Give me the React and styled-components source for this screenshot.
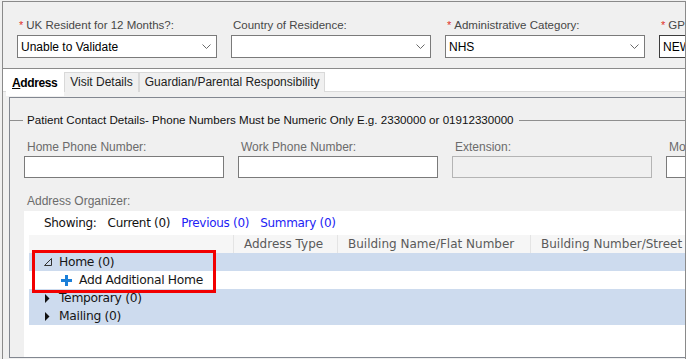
import React from "react";
import styled, { createGlobalStyle } from "styled-components";

const GlobalStyle = createGlobalStyle`
  html, body {
    margin: 0;
    padding: 0;
    background: #f0f0f0;
    overflow: hidden;
  }
  body {
    font-family: "Liberation Sans", Arial, sans-serif;
  }
`;

// top bar fields
const topFields = [
  { label: "UK Resident for 12 Months?:", value: "Unable to Validate", required: true },
  { label: "Country of Residence:", value: "" },
  { label: "Administrative Category:", value: "NHS", required: true },
  { label: "GP Practice:", value: "NEWCASTLE", required: true, focused: true },
];

const phoneFields = [
  { label: "Home Phone Number:" },
  { label: "Work Phone Number:" },
  { label: "Extension:", disabled: true },
  { label: "Mobile Phone Number:" },
];

const columns = [
  { title: "", width: 205 },
  { title: "Address Type", width: 104 },
  { title: "Building Name/Flat Number", width: 193 },
  { title: "Building Number/Street", width: 200 },
];

const Chevron = () => (
  <svg width="9" height="5" viewBox="0 0 9 5">
    <polyline points="0.5,0.5 4.5,4.5 8.5,0.5" fill="none" stroke="#6a6a6a" strokeWidth="1" />
  </svg>
);

const OpenGlyph = () => (
  <svg width="8" height="8" viewBox="0 0 8 8">
    <path d="M7.5 0.5 L7.5 7.5 L0.5 7.5 Z" fill="none" stroke="#333" strokeWidth="1" />
  </svg>
);

const ClosedGlyph = () => (
  <svg width="8" height="9" viewBox="0 0 8 9">
    <path d="M1 0 L5.5 4.5 L1 9 Z" fill="#111" />
  </svg>
);

const PlusIcon = () => (
  <svg width="11" height="11" viewBox="0 0 11 11">
    <rect x="4" y="0" width="3" height="11" fill="#1b7fd8" />
    <rect x="0" y="4" width="11" height="3" fill="#1b7fd8" />
  </svg>
);

const App = () => {
  return (
    <>
      <GlobalStyle />
      <Frame>
        <TopPanel>
          {topFields.map((f) => (
            <TopField key={f.label}>
              <TopLabel>
                {f.required && <Star>*</Star>}
                {f.label}
              </TopLabel>
              <SelectBox $focused={f.focused}>
                <span>{f.value}</span>
                <Chevron />
              </SelectBox>
            </TopField>
          ))}
        </TopPanel>

        <TabStrip>
          <Tab $active>
            <u>A</u>ddress
          </Tab>
          <Tab>Visit Details</Tab>
          <Tab>Guardian/Parental Responsibility</Tab>
        </TabStrip>

        <TabPanel>
          <GroupHeader>
            <LeadLine />
            <GroupTitle>
              Patient Contact Details- Phone Numbers Must be Numeric Only E.g. 2330000 or 01912330000
            </GroupTitle>
            <TrailLine />
          </GroupHeader>

          <PhoneRow>
            {phoneFields.map((f) => (
              <PhoneField key={f.label}>
                <FieldLabel>{f.label}</FieldLabel>
                <TextInput $disabled={f.disabled} />
              </PhoneField>
            ))}
          </PhoneRow>

          <OrgLabel>Address Organizer:</OrgLabel>

          <OrgArea>
            <ShowingRow>
              <span>Showing:</span>
              <span>Current (0)</span>
              <LinkText>Previous (0)</LinkText>
              <LinkText>Summary (0)</LinkText>
            </ShowingRow>

            <Grid>
              <HeaderRow>
                {columns.map((c, i) => (
                  <HeaderCell key={i} $width={c.width}>
                    {c.title}
                  </HeaderCell>
                ))}
              </HeaderRow>

              <TreeRow $tint $indent={15}>
                <Expander>
                  <OpenGlyph />
                </Expander>
                Home (0)
              </TreeRow>
              <TreeRow $indent={32}>
                <AddIcon>
                  <PlusIcon />
                </AddIcon>
                Add Additional Home
              </TreeRow>
              <TreeRow $tint $indent={15}>
                <Expander>
                  <ClosedGlyph />
                </Expander>
                Temporary (0)
              </TreeRow>
              <TreeRow $tint $indent={15}>
                <Expander>
                  <ClosedGlyph />
                </Expander>
                Mailing (0)
              </TreeRow>

              <Highlight />
            </Grid>
          </OrgArea>
        </TabPanel>
      </Frame>
    </>
  );
};

const Frame = styled.div`
  box-sizing: border-box;
  margin: 1px 0 0 2px;
  width: 684px;
  height: 358px;
  border: 1px solid #8a8a8a;
  border-bottom: none;
  display: flex;
  flex-direction: column;
  overflow: hidden;
`;

const TopPanel = styled.div`
  display: flex;
  gap: 14px;
  padding: 15px 0 10px 14px;
  border-bottom: 1px solid #8a8a8a;
  overflow: hidden;
`;

const TopField = styled.div`
  display: flex;
  flex-direction: column;
  width: 200px;
  flex-shrink: 0;
`;

const TopLabel = styled.div`
  font-size: 11.5px;
  line-height: 16px;
  height: 16px;
  margin-bottom: 2px;
  padding-left: 2px;
  color: #474747;
  white-space: nowrap;
`;

const Star = styled.span`
  color: #e0302a;
  font-size: 11px;
  margin-right: 3px;
`;

const SelectBox = styled.div`
  box-sizing: border-box;
  height: 23px;
  display: flex;
  align-items: center;
  justify-content: space-between;
  padding: 0 5px 0 3px;
  background: #fff;
  border: 1px solid ${(p) => (p.$focused ? "#3c3c3c" : "#7a7a7a")};
  font-size: 12px;
  color: #000;
  white-space: nowrap;
`;

const TabStrip = styled.div`
  box-sizing: border-box;
  display: flex;
  align-items: flex-end;
  height: 23px;
  padding-left: 3px;
  background: #fff;
  border-bottom: 1px solid #dadada;
`;

const Tab = styled.div`
  box-sizing: border-box;
  height: ${(p) => (p.$active ? "26px" : "20px")};
  margin-bottom: ${(p) => (p.$active ? "-5px" : "-1px")};
  padding: ${(p) => (p.$active ? "4px 6px 0 5px" : "1px 5px 0")};
  background: ${(p) => (p.$active ? "#fff" : "#f0f0f0")};
  border: 1px solid ${(p) => (p.$active ? "#fff" : "#d9d9d9")};
  border-bottom: none;
  font-size: 12px;
  line-height: 16px;
  font-weight: ${(p) => (p.$active ? 700 : 400)};
  letter-spacing: ${(p) => (p.$active ? "-0.4px" : "0")};
  color: ${(p) => (p.$active ? "#000" : "#222")};
  white-space: nowrap;
`;

const TabPanel = styled.div`
  flex: 1;
  min-height: 0;
  margin: 5px 0 1px 6px;
  border: 1px solid #828790;
  border-right: none;
  display: flex;
  flex-direction: column;
`;

const GroupHeader = styled.div`
  display: flex;
  align-items: center;
  height: 16px;
  margin-top: 14px;
`;

const LeadLine = styled.div`
  width: 13px;
  height: 1px;
  background: #8f8f8f;
`;

const TrailLine = styled.div`
  flex: 1;
  height: 1px;
  background: #8f8f8f;
`;

const GroupTitle = styled.div`
  margin: 0 5px 0 4px;
  font-size: 11.6px;
  line-height: 16px;
  color: #111;
  white-space: nowrap;
`;

const PhoneRow = styled.div`
  display: flex;
  gap: 14px;
  margin-top: 11px;
  padding-left: 14px;
`;

const PhoneField = styled.div`
  display: flex;
  flex-direction: column;
  width: 200px;
  flex-shrink: 0;
`;

const FieldLabel = styled.div`
  font-size: 12px;
  line-height: 16px;
  margin-bottom: 1px;
  padding-left: 3px;
  color: #6b6b6b;
  white-space: nowrap;
`;

const TextInput = styled.div`
  box-sizing: border-box;
  height: 22px;
  background: ${(p) => (p.$disabled ? "#f0f0f0" : "#fff")};
  border: 1px solid ${(p) => (p.$disabled ? "#b4b4b4" : "#7a7a7a")};
`;

const OrgLabel = styled.div`
  margin-top: 15px;
  padding-left: 17px;
  font-size: 12px;
  line-height: 16px;
  color: #6b6b6b;
`;

const OrgArea = styled.div`
  flex: 1;
  margin: 2px 0 0 14px;
  background: #fff;
  display: flex;
  flex-direction: column;
  font-family: "DejaVu Sans", Verdana, sans-serif;
  font-size: 12px;
  letter-spacing: -0.3px;
`;

const ShowingRow = styled.div`
  display: flex;
  gap: 11px;
  padding: 4px 0 0 20px;
  line-height: 16px;
  color: #111;
  white-space: nowrap;
`;

const LinkText = styled.span`
  color: #2222f5;
`;

const Grid = styled.div`
  position: relative;
  margin: 4px 0 0 5px;
`;

const HeaderRow = styled.div`
  display: flex;
  height: 18px;
  background: #f6f6f6;
  white-space: nowrap;
`;

const HeaderCell = styled.div`
  box-sizing: border-box;
  flex-shrink: 0;
  width: ${(p) => p.$width}px;
  padding-left: 10px;
  line-height: 18px;
  color: #5a5a5a;
  letter-spacing: 0;
  border-right: 1px solid #e4e4e4;
  overflow: hidden;
`;

const TreeRow = styled.div`
  display: flex;
  align-items: center;
  height: 18px;
  padding-left: ${(p) => p.$indent}px;
  background: ${(p) => (p.$tint ? "#cddbee" : "#fff")};
  color: #161616;
  font-size: 12.3px;
  white-space: nowrap;
`;

const Expander = styled.span`
  display: flex;
  align-items: center;
  width: 15px;
  flex-shrink: 0;
`;

const AddIcon = styled.span`
  display: flex;
  align-items: center;
  width: 18px;
  flex-shrink: 0;
`;

const Highlight = styled.div`
  position: absolute;
  left: 3px;
  top: 15px;
  width: 184px;
  height: 43px;
  box-sizing: border-box;
  border: 3px solid #f20000;
  pointer-events: none;
`;

export default App;
